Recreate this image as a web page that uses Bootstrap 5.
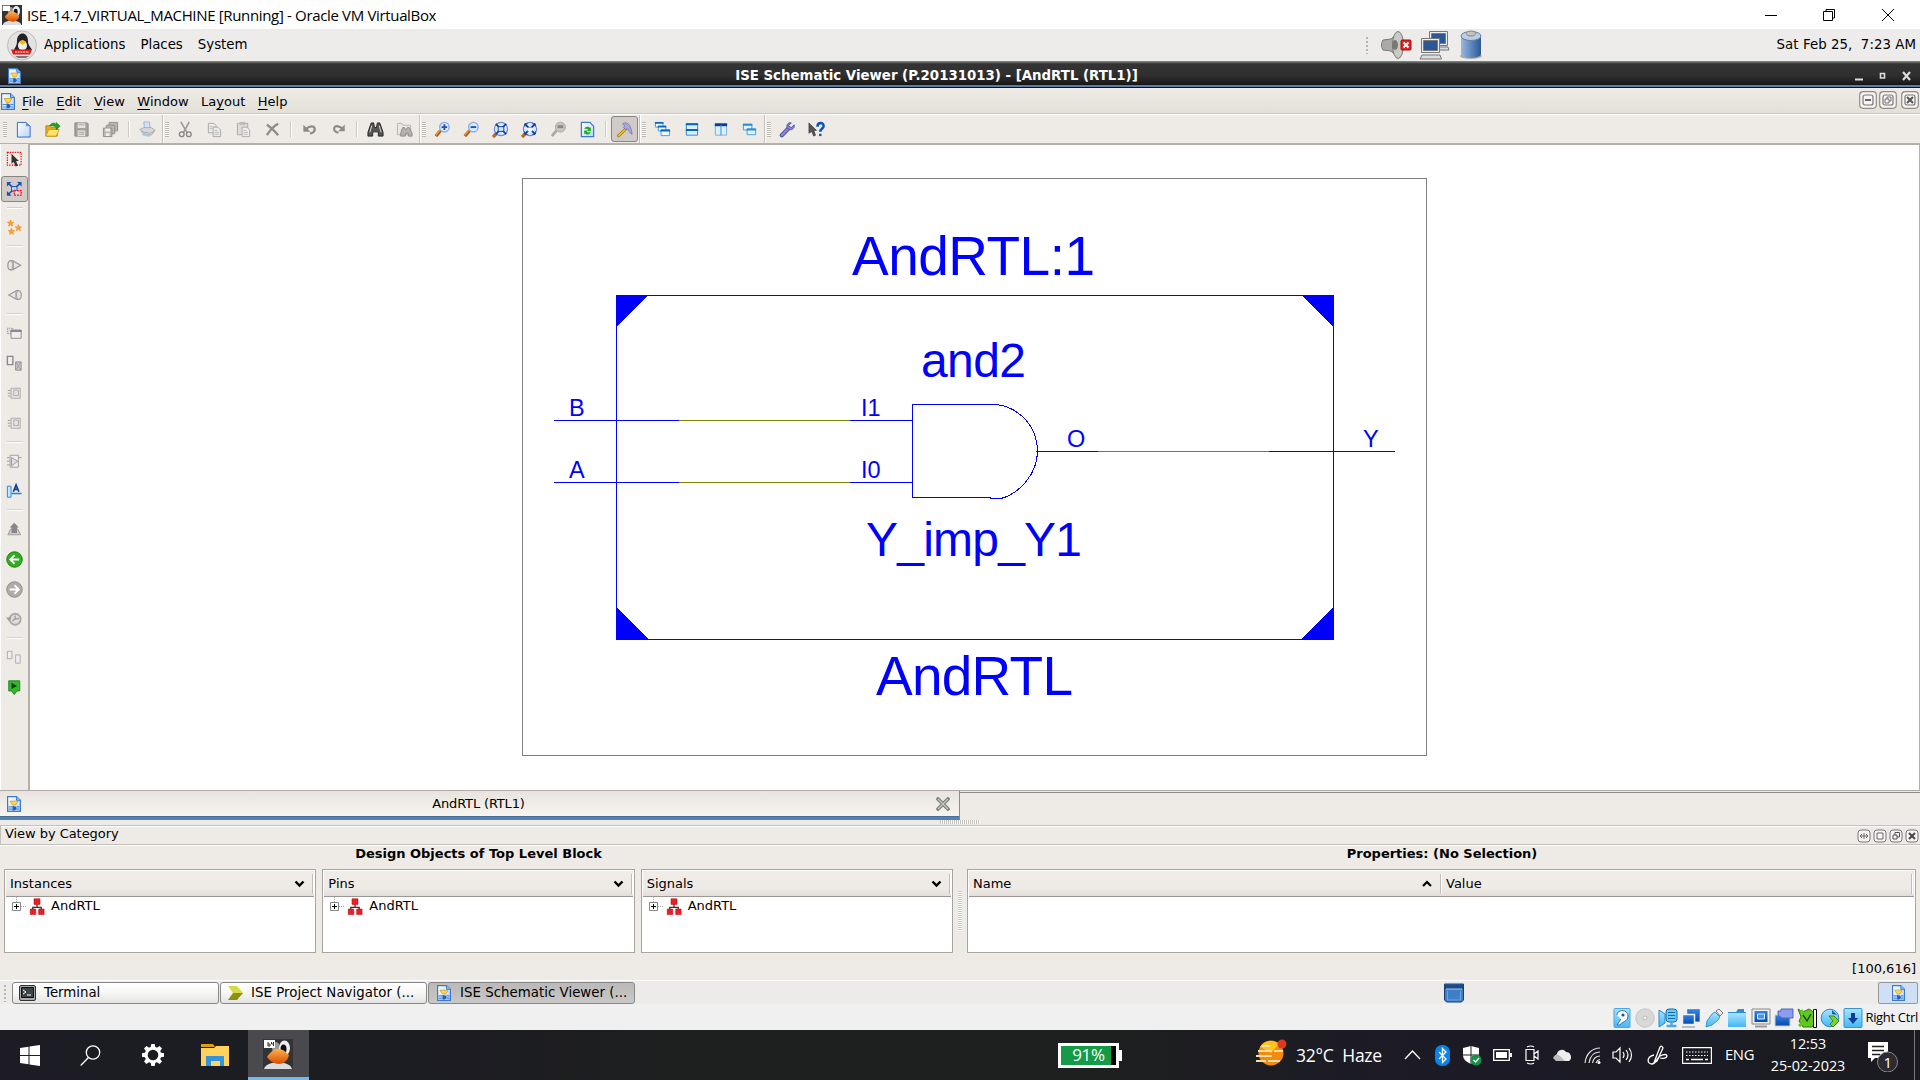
<!DOCTYPE html>
<html lang="en">
<head>
<meta charset="utf-8">
<title>ISE_14.7_VIRTUAL_MACHINE [Running] - Oracle VM VirtualBox</title>
<link href="https://cdn.jsdelivr.net/npm/bootstrap@5.3.0/dist/css/bootstrap.min.css" rel="stylesheet">
<style>
body{width:1920px;height:1080px;overflow:hidden;font-family:"DejaVu Sans",sans-serif;font-size:13px;line-height:1.2;color:#000;background:#eeebe7}
body>*{flex:none}
svg{display:block;flex:none}
.win{font-family:"Open Sans","Noto Sans",sans-serif}
.win-title{height:29px;background:#fff;font-size:15px;padding-left:2px}
.win-title .cap{letter-spacing:-.34px;margin-left:5px}
.win-btn{width:58.5px}
.gpanel{height:32px;background:#edeceb;font-size:13.33px;padding-left:7px}
.dark-title{height:27px;padding-top:2px;background:linear-gradient(#8a9088 0,#50534f 2px,#333 3px,#303030 14px,#1a1a1a 23px,#131313 24px,#5b7ca8 24px,#5b7ca8 26px,#0b0e14 26px);color:#fff;font-weight:bold;font-size:13.33px}
.dside{width:260px}
.mbar{height:26px;padding-top:2px;background:linear-gradient(#efebe6,#e3dfd9);border-bottom:1px solid #cbc7c2}
.mbar u{text-underline-offset:3px}
.tbar{height:31px;background:#eeebe6;border-top:1px solid #fff;border-bottom:2px solid #b5b0aa}
.tgroup{border-right:1px solid #c5c0bb;box-shadow:1px 0 #fff;height:28px;margin-right:-1px}
.tgroup:last-child{border:0;box-shadow:none}
.grip{width:9px;display:flex;justify-content:center;align-items:center}
.grip::before{content:"";width:4px;height:15px;background:repeating-linear-gradient(#b9b5b0 0 1px,#fff 1px 2px)}
.tbtn{width:29px;height:26px;margin-top:1px;display:flex;align-items:center;justify-content:center}
.tbtn.on{width:27px;margin:1px 1px 0}
.tbtn.on,.sbtn.on{background:#d0cbc6;border:1px solid #8a8580;border-radius:3px}
.tsep{width:8px;display:flex;justify-content:center;align-items:center}
.tsep::before{content:"";width:2px;height:16px;border-left:1px solid #ccc8c3;background:#fff}
.sidebar{width:28px;background:#eeebe6;border-left:1px solid #fff;margin-top:-1px}
.sbtn{height:30px;width:27px;display:flex;align-items:center;justify-content:center}
.sbtn.on{height:26px;margin:2px 0}
.ssep{height:8px;display:flex;align-items:center;justify-content:center}
.ssep::before{content:"";width:16px;height:2px;border-top:1px solid #d5d0cb;background:#fff}
.workarea{height:645px}
.canvas-box{border-left:2px solid #b5b0aa;border-right:1px solid #b5b0aa;background:#fff}
.tabrow{height:30px;border-top:1px solid #b0aba6}
.dtab{width:960px;height:29px;background:linear-gradient(#e8e3df,#f8f5f1);border-right:1px solid #8f8b87;border-bottom:3px solid #5482b1;box-shadow:inset 0 -1px #496f98;padding:0 9px 0 7px}
.tabrest{border-top:1px solid #8f8b87;margin-top:1px}
.hgrip{height:5px;display:flex;justify-content:center}
.hgrip::before{content:"";width:40px;height:4px;background:repeating-linear-gradient(90deg,#c5c1bc 0 1px,#fff 1px 2px)}
.docktitle{height:20px;border:1px solid #c3bfbb;border-right:0;box-shadow:inset 0 1px #fff,0 1px #fff;padding:0 1px 2px 4px;letter-spacing:-.05px}
.headrow{height:24px;font-weight:bold;padding-bottom:7px}
.panebox{height:84px;border:1px solid #a9a4a0;background:#fff;padding:1px}
.panehead{height:26px;background:linear-gradient(#f0ece8,#eeeae6 70%,#e3deda);border-bottom:1px solid #9d9793;padding-left:4px}
.vline{width:2px;height:20px;border-left:1px solid #c3beba;background:#fff}
.treerow{height:18px;padding-left:6px}
.vgrip{width:14px;display:flex;align-items:center;justify-content:center}
.vgrip::before{content:"";width:4px;height:40px;background:repeating-linear-gradient(#c5c1bc 0 1px,#fff 1px 2px)}
.left-pane{width:953px;padding-left:4px;gap:6px}
.statusb{height:27px;padding:4px 4px 0 0}
.gtask{height:24px;background:#ecebea;border-top:1px solid #fff;font-size:13.33px;padding-left:12px}
.gbtn{width:206.5px;height:22px;border:1px solid #888;border-radius:3px;background:linear-gradient(#fff,#f8f8f7 45%,#e4e3e1);padding-left:6px}
.gbtn.on{background:linear-gradient(#bab9b7,#c9c8c6);padding-top:1px}
.wsp{width:40px;height:22px;border:1px solid #999;border-radius:2px;background:#cfdff5;margin-right:2px}
.vbstat{height:26px;background:#f0f0f0;font-size:13px;padding-top:2px}
.vbstat .ic{width:23.1px;display:flex;justify-content:center}
.vbstat span{letter-spacing:-.32px;margin:0 2px 0 1px}
.wtask{height:50px;background:linear-gradient(90deg,#1d1c24,#1c1c23 22%,#1e1f1f 35%,#1e1f1f 58%,#1c1b26 72%,#1a1a20);color:#fff}
.wt{height:50px;display:flex;align-items:center;justify-content:center}
.wt.tile{width:61px;background:#49494e;border-bottom:3px solid #76b9ed}
.w60{width:60px}.w63{width:63px}.w30{width:30px}.w40{width:40px}.w45{width:45px}.w50{width:50px}.w92{width:92px}
.battery-box{width:61px;height:25px;border:3px solid #fff;background:linear-gradient(90deg,#159a48 90%,#000 90%);font-size:17px;letter-spacing:-.3px}
.clock{font-size:14.4px;line-height:22px;text-align:center;letter-spacing:-.05px}
.weather{font-size:17.5px;letter-spacing:-.25px;white-space:pre;width:88px;margin-left:7px}
.dotgrip{width:5px;height:18px;background:radial-gradient(circle,#b5b5b3 .8px,transparent 1px) 0 0/4px 4px}
</style>
</head>
<body class="d-flex flex-column">
<svg width="0" height="0" class="position-absolute">
<defs>
<linearGradient id="gb" x2="1" y2="1"><stop stop-color="#fff"/><stop offset="1" stop-color="#b8d5f8"/></linearGradient>
<linearGradient id="gc" x2="0" y2="1"><stop stop-color="#a9e3ff"/><stop offset="1" stop-color="#45b7f5"/></linearGradient>
<linearGradient id="gd" x2="0" y2="1"><stop stop-color="#3485e8"/><stop offset="1" stop-color="#0448a8"/></linearGradient>
<linearGradient id="gl" x2="1"><stop stop-color="#9bb8dc"/><stop offset=".5" stop-color="#5d89c0"/><stop offset="1" stop-color="#2e5890"/></linearGradient>
<linearGradient id="go" x2="0" y2="1"><stop stop-color="#ffb24d"/><stop offset="1" stop-color="#d94b00"/></linearGradient>
<symbol id="doc" viewBox="0 0 14 17" preserveAspectRatio="none"><path d="M.6.600h8.900l3.900 3.900v11.900H.6z" fill="url(#gb)" stroke="#3a7bd0" stroke-width="1.200"/><path d="M9.500.600v4h4" fill="#8bbcf2" stroke="#3a7bd0"/><path d="M3 5.500h8L8.500 9.500h-3z" fill="#ffd84a" stroke="#d0a020" stroke-width=".8"/><path d="M1.500 11.500h4m4 0h3M1.500 14h4m4 0h3" stroke="#4c8ade" stroke-width="1.200"/><path d="M5.500 10.500v5q4 0 4-2.500t-4-2.500z" fill="#1f5fc0"/></symbol>
<symbol id="newf" viewBox="0 0 18 18"><path d="M2.500 1.500h9l4.500 4v11.500H2.500z" fill="url(#gb)" stroke="#2e66c4"/><path d="M11.500 1.500v4H16z" fill="#5597ec"/></symbol>
<symbol id="open" viewBox="0 0 18 18"><path d="M2 5h5l1 2h6v9H2z" fill="#e0ac1d" stroke="#b98a14"/><path d="M2 16l3-7h11l-3 7z" fill="#ffe566" stroke="#c79b20"/><path d="M6 5c2-3 5-4 7-1V1.500l4 4-4 4V7c-2-2-4-2-7-2z" fill="#21a321" stroke="#13780f" stroke-width=".6"/></symbol>
<symbol id="save" viewBox="0 0 18 18"><path d="M2 2h13l1 1v13H2z" fill="#a4a29f" stroke="#898683"/><path d="M5 2.500h8v5H5zM5 10h8v6H5z" fill="#e5e3e0"/><path d="M6 4h6M6 12h6M6 14h6" stroke="#a4a29f"/></symbol>
<symbol id="savea" viewBox="0 0 18 18"><g fill="#bab7b3" stroke="#8f8c88"><path d="M7.500 1.500h9v9h-9z"/><path d="M4.500 4.500h9v9h-9z"/><path d="M1.500 7.500h9v9h-9z"/></g><path d="M3.500 8h5v3h-5zM4 13h4v3H4z" fill="#eee"/></symbol>
<symbol id="print" viewBox="0 0 18 18"><path d="M5 1h6l1 8H6z" fill="#d2e3f8" stroke="#8fa9ca" stroke-width=".8"/><path d="M1 9l4-2h8l4 3-4 5-9-2z" fill="#d8d7d6" stroke="#aaa"/><path d="M2 11l10 2 5-3" fill="none" stroke="#aaa"/><path d="M4 13l8 2-1 2-8-2z" fill="#a7c9ee"/></symbol>
<symbol id="cut" viewBox="0 0 18 18"><path d="M4 1l6.500 11M13 1L7 12" stroke="#999" stroke-width="1.700"/><circle cx="5" cy="14" r="2.500" fill="none" stroke="#888" stroke-width="1.500"/><circle cx="12.500" cy="14" r="2.500" fill="none" stroke="#888" stroke-width="1.500"/></symbol>
<symbol id="copy" viewBox="0 0 18 18"><g fill="#ecebe9" stroke="#aaa8a5"><path d="M2.500 2.500h6l2 2v8h-8z"/><path d="M7.500 6.500h5l3 3v7h-8z"/></g><path d="M4 6h3M4 8h3M9 10h3M9 12h5M9 14h5" stroke="#bbb"/></symbol>
<symbol id="paste" viewBox="0 0 18 18"><path d="M2.500 2.500h11v12h-11z" fill="#dedcd9" stroke="#aaa8a5"/><path d="M5 1h6v3H5z" fill="#bbb"/><path d="M7.500 6.500h5l3 3v7h-8z" fill="#f0efed" stroke="#aaa"/><path d="M9 10h3M9 12h5M9 14h5" stroke="#bbb"/></symbol>
<symbol id="del" viewBox="0 0 18 18"><path d="M3 4q5 3 12 11M15 3Q9 6 3 15" fill="none" stroke="#8d8a87" stroke-width="2.400"/></symbol>
<symbol id="undo" viewBox="0 0 18 18"><path d="M4 9Q13 3 14.500 8c.5 3-2 5-5 5" fill="none" stroke="#8d8a87" stroke-width="2.400"/><path d="M2.500 4v7.500H10z" fill="#8d8a87"/></symbol>
<symbol id="bino" viewBox="0 0 18 18"><path d="M4.500 2h2.500l1 5h2l1-5h2.500l3.500 10v4h-5v-4.500H6V16H1v-4z" fill="#555" stroke="#222"/><path d="M5 5L3 12M13 5l2 7" stroke="#ddd"/></symbol>
<symbol id="bino2" viewBox="0 0 18 18"><path d="M1.500 2.500h5l1 2h8v10h-14z" fill="#e9e7e4" stroke="#b5b3b0"/><path d="M7 7h2l1 2h1l1-2h2l3 6v3h-4v-3h-3v3H5v-3z" fill="#b5b3b0" stroke="#8b8987"/></symbol>
<symbol id="mag" viewBox="0 0 18 18"><path d="M2 16l5-6" stroke="#ad5c18" stroke-width="3.400"/><path d="M2 15l4-5" stroke="#efa244" stroke-width="1.200"/><circle cx="11" cy="6.500" r="5" fill="#dceaff" stroke="#8aa5ea" stroke-width="1.400"/></symbol>
<symbol id="zin" viewBox="0 0 18 18"><use href="#mag"/><path d="M8 6.500h6M11 3.500v6" stroke="#1c56ad" stroke-width="2"/></symbol>
<symbol id="zout" viewBox="0 0 18 18"><use href="#mag"/><path d="M8 6.500h6" stroke="#1c56ad" stroke-width="2"/></symbol>
<symbol id="zfit" viewBox="0 0 18 18"><path d="M1 17l4-4" stroke="#bd6718" stroke-width="3.500"/><circle cx="9.500" cy="8.500" r="7" fill="#dceaff" stroke="#6a89e0" stroke-width="1.300"/><path d="M4 3l11 11M15 3L4 14" stroke="#123e90" stroke-width="1.800"/><path d="M6.500 6h6v5h-6z" fill="#cfe6ff" stroke="#123e90"/></symbol>
<symbol id="zsel" viewBox="0 0 18 18"><path d="M1 17l4-4" stroke="#bd6718" stroke-width="3.500"/><circle cx="9.500" cy="8.500" r="7" fill="#dceaff" stroke="#6a89e0" stroke-width="1.300"/><path d="M4 3l11 11M15 3L4 14" stroke="#123e90" stroke-width="1.800"/><path d="M7 7h5v4H7z" fill="#f0f6ff"/><path d="M4 6v-3h3M12 3h3v3M4 11v3h3M15 11v3h-3" fill="none" stroke="#123e90"/></symbol>
<symbol id="zoff" viewBox="0 0 18 18"><path d="M2 16l5-6" stroke="#aaa8a5" stroke-width="3"/><circle cx="11" cy="6.500" r="5.300" fill="#c6c3c0" stroke="#aaa8a5"/><path d="M8 4.500h6v3H8z" fill="#888"/></symbol>
<symbol id="refr" viewBox="0 0 18 18"><path d="M2.500 1.500h9l4 4v11h-13z" fill="url(#gb)" stroke="#3a7bd0" stroke-width="1.300"/><path d="M5.500 8.500c1-3 5-3 6-1l1-1v4h-4l1.500-1.500C9 8 7 8 5.500 8.500M12.500 11c-1 4-5 4-6 2l-1 1v-4h4L8 11.500c1 1 3 1 4.500-.5" fill="#18a818"/></symbol>
<symbol id="hammer" viewBox="0 0 18 18"><path d="M1 15.500l9-8 1.500 1.500L3 17z" fill="#f5c21d" stroke="#a87900"/><path d="M7 3c4-3 9 0 10 11-3-1-3-4-5-6L10 9 8 7l1-2z" fill="#a9a8dd" stroke="#706fb2" stroke-width=".8"/></symbol>
<symbol id="casc" viewBox="0 0 18 18"><g fill="#eef7ff" stroke="#3d9be0"><path d="M1.500 1.500h8v5h-8z"/><path d="M4.500 5.500h8v5h-8z"/><path d="M7.500 9.500h9v6h-9z"/></g><path d="M1 2h9M4 6h9M7 10h10" stroke="#0667c2" stroke-width="2"/></symbol>
<symbol id="tileh" viewBox="0 0 18 18"><path d="M3.500 3h12v12h-12z" fill="#d8effe" stroke="#2b86cf"/><path d="M3 3.500h13M3 9.500h13" stroke="#0667c2" stroke-width="2"/></symbol>
<symbol id="tilev" viewBox="0 0 18 18"><path d="M3.500 3h12v12h-12z" fill="#d8effe" stroke="#73aee0"/><path d="M3 4h13" stroke="#063f9a" stroke-width="3"/><path d="M9.500 4v11" stroke="#3d86cf"/></symbol>
<symbol id="tilec" viewBox="0 0 18 18"><g fill="#e0f3ff" stroke="#3d9be0"><path d="M2.500 3.500h9v6h-9z"/><path d="M6.500 8.500h9v6h-9z"/></g><path d="M2 4h10M6 9h10" stroke="#2d8ad5" stroke-width="2"/></symbol>
<symbol id="wrench" viewBox="0 0 18 18"><path d="M3 15l7-7" stroke="#4f4f9c" stroke-width="4.500" stroke-linecap="round"/><path d="M3 15l7-7" stroke="#8987cf" stroke-width="2.500" stroke-linecap="round"/><path d="M13 2c-3-1-6 2-4 6 4 3 8 0 7-4l-3 3-3-2z" fill="#8987cf" stroke="#55549f"/></symbol>
<symbol id="whats" viewBox="0 0 18 18"><path d="M1 2l8 8H6l2 5-2 1-2-5-3 2z" fill="#555" stroke="#333" stroke-width=".7"/><path d="M10 6c0-5 7-5 6.500-.5C16.500 8 13 8 13 11.500" fill="none" stroke="#0b53b8" stroke-width="2.600"/><path d="M11.700 13.500h2.600V16h-2.600z" fill="#0b53b8"/></symbol>
<symbol id="sel" viewBox="0 0 18 18"><path d="M1.500 1.500h15v14h-15z" fill="none" stroke="#f00" stroke-width="1.300" stroke-dasharray="1.500 1.200"/><path d="M6 3l8 8h-3l2 5-2.500 1-2-5L6 14z" fill="#333"/></symbol>
<symbol id="fit" viewBox="0 0 18 18"><path d="M2 2l14 13M16 2L2 15" stroke="#1d4fb0" stroke-width="1.800"/><path d="M1 1h5L1 6zM17 1v5l-5-5zM1 16v-5l5 5z" fill="#1d4fb0"/><path d="M6 6h6v5H6z" fill="#add4fa" stroke="#1d4fb0"/><path d="M9 10.500h7.500v5H9z" fill="#dfd9d5" stroke="#f00" stroke-width="1.300" stroke-dasharray="2 1"/></symbol>
<symbol id="stars" viewBox="0 0 18 18"><g fill="#ffa32c" stroke="#f17d17" stroke-width=".5"><path id="st" d="M5 1l1 2.400 2.600.2-2 1.700.6 2.600L5 6.500 2.800 7.900l.6-2.600-2-1.700L4 3.400z"/><use href="#st" x="8.500" y="5"/><use href="#st" x="1" y="9"/></g></symbol>
<symbol id="cone" viewBox="0 0 18 18"><path d="M5 4c-4 0-4 10 0 10h2l9-5-9-5z" fill="#e7e5e2" stroke="#999" stroke-width="1.300"/><path d="M5 4c3 0 3 10 0 10M8 4v10" fill="none" stroke="#999"/></symbol>
<symbol id="hier" viewBox="0 0 18 18"><path d="M1.500 3.500h6v6h-6z" fill="#ddd" stroke="#888" stroke-dasharray="1 1"/><path d="M5.500 5.500h11v9h-11z" fill="#eee" stroke="#888"/><path d="M5 6.500h12" stroke="#888" stroke-width="2"/></symbol>
<symbol id="two" viewBox="0 0 18 18"><path d="M1.500 1.500h6v9h-6z" fill="#eee" stroke="#888" stroke-width="1.500"/><path d="M10.500 7.500h6v9h-6z" fill="#ccc" stroke="#888"/><path d="M11 8l5 8M16 8l-5 8" stroke="#999"/></symbol>
<symbol id="chip" viewBox="0 0 18 18"><path d="M5.500 3.500h10v11h-10z" fill="#e5e3e0" stroke="#aaa"/><path d="M8.500 5.500h5v6h-5z" fill="none" stroke="#aaa"/><path d="M2 6h3M2 9h3M2 12h3" stroke="#999"/></symbol>
<symbol id="buf" viewBox="0 0 18 18"><path d="M4.500 2.500h9v13h-9z" fill="#eee" stroke="#999"/><path d="M6 5l7 4-7 5z" fill="#ddd" stroke="#999"/><path d="M1 5h3M1 9h3M1 13h3M14 5h3" stroke="#999"/></symbol>
<symbol id="lab" viewBox="0 0 18 18"><path d="M1.500 3.500h4v12h-4z" fill="#c3eaff" stroke="#1d86da"/><path d="M6 11.500h11" stroke="#1d86da" stroke-width="1.500"/><path d="M8 9.500L11 2l3 7.500M9 7h4" fill="none" stroke="#123e90" stroke-width="1.800"/></symbol>
<symbol id="up" viewBox="0 0 18 18"><path d="M2 15l3-6h8l3 6z" fill="#ccc" stroke="#999"/><path d="M9 2l5 5h-2v6H6V7H4z" fill="#888"/></symbol>
<symbol id="arr" viewBox="0 0 18 18"><path d="M14 9H5M9 4.500L4.500 9 9 13.500" fill="none" stroke="#fff" stroke-width="1.900"/></symbol>
<symbol id="hist" viewBox="0 0 18 18"><circle cx="10" cy="9" r="6" fill="#e0dedb" stroke="#aaa" stroke-width="2"/><path d="M10 5v4l4-1M7 11l2-2" fill="none" stroke="#999" stroke-width="1.400"/><path d="M0 7h6l-3 4z" fill="#999"/></symbol>
<symbol id="two2" viewBox="0 0 18 18"><g fill="#eee" stroke="#aaa"><path d="M1.500 2.500h5v8h-5z"/><path d="M10.500 6.500h5v9h-5z"/></g></symbol>
<symbol id="play" viewBox="0 0 18 18"><path d="M3 2h12v11h-3l-3 4-3-4H3z" fill="#36b62c" stroke="#16851a"/><path d="M6 4l6 3.500L6 11z" fill="#063f0a"/></symbol>
<symbol id="tree" viewBox="0 0 18 20"><path d="M9 7v4M4 14v-3h10v3" fill="none" stroke="#333" stroke-width="1.500"/><g fill="#ee1c24" stroke="#c40d14" stroke-width=".7"><path d="M5.500 1h7v6.500h-7zM1 13h6.500v6.500H1zM11 13h6.500v6.500H11z"/></g></symbol>
<symbol id="tux" viewBox="0 0 30 30"><path d="M0 0h30v30H0z" fill="#333"/><path d="M1 30c2-9 26-9 28 0z" fill="#ddd"/><ellipse cx="13" cy="9" rx="4" ry="6" fill="#999"/><ellipse cx="21.500" cy="9" rx="5.500" ry="7.500" fill="#eee"/><ellipse cx="20.500" cy="10" rx="3" ry="4.500" fill="#111"/><path d="M4 18c4-6 9-9 12-8 4 0 8 4 10 6-1 6-6 9-10 9-5 0-9-3-12-7z" fill="url(#go)"/><path d="M1 1h11v8H1z" fill="#fff"/></symbol>
<symbol id="mini" viewBox="0 0 18 18"><rect x=".7" y=".7" width="16.600" height="16.600" rx="3.500" fill="#f7f5f3" stroke="#918c87" stroke-width="1.200"/><rect x="4" y="4" width="10" height="10" rx="2" fill="none" stroke="#777" stroke-width="1.200"/></symbol>
</defs>
</svg>

<header class="win win-title d-flex align-items-center">
 <svg width="20" height="20" viewBox="0 0 30 30"><use href="#tux"/></svg>
 <span class="cap">ISE_14.7_VIRTUAL_MACHINE [Running] - Oracle VM VirtualBox</span>
 <div class="d-flex ms-auto" style="margin-right:3px">
  <div class="win-btn d-flex justify-content-center"><svg width="12" height="14"><path d="M0 7.500h12" stroke="#000"/></svg></div>
  <div class="win-btn d-flex justify-content-center"><svg width="13" height="14"><path d="M.5 3.500h9v9h-9zM3 3V1.500h8.500V10H10" fill="none" stroke="#000"/></svg></div>
  <div class="win-btn d-flex justify-content-center"><svg width="12" height="14"><path d="M0 1l12 12M12 1L0 13" stroke="#000"/></svg></div>
 </div>
</header>

<nav class="gpanel d-flex align-items-center">
 <svg width="30" height="31" viewBox="0 0 30 31"><circle cx="15" cy="15.500" r="14.500" fill="#e2e2e2" stroke="#bbb"/><path d="M7 20c1-3 3-4 3-9 0-10 11-10 11 0 0 5 3 6 4 9z" fill="#222"/><ellipse cx="15.500" cy="15.500" rx="4.500" ry="5" fill="#eee"/><path d="M12 12l3.500-2 4 2-4 3z" fill="#f8b80e"/><path d="M4 19.500h21l-2 5H6z" fill="#df1b1b"/><path d="M8 22h14" stroke="#fff" stroke-dasharray="2 .7"/><path d="M8 26h14l-3 2h-8z" fill="#777"/></svg>
 <span style="margin-left:7px">Applications</span><span style="margin-left:15px">Places</span><span style="margin-left:15px">System</span>
 <div class="d-flex align-items-center ms-auto" style="margin-right:292px;gap:7px">
  <div class="dotgrip me-1"></div>
  <svg width="31" height="30" viewBox="0 0 31 30"><path d="M2 10l8-1 8-7v26l-8-7-8-1c-2-3-2-7 0-10z" fill="#aaaba7" stroke="#777973"/><ellipse cx="17" cy="15" rx="5.500" ry="13.500" fill="#c9cac5" stroke="#7a7c76"/><ellipse cx="14" cy="15" rx="3" ry="5" fill="#777973"/><rect x="20" y="10" width="10" height="10" rx="1" fill="#e52222" stroke="#a80a0a"/><path d="M22.500 12.500l5 5m0-5l-5 5" stroke="#fff" stroke-width="1.800"/></svg>
  <svg width="31" height="30" viewBox="0 0 31 30"><g stroke="#777"><path d="M10.500 1.500h18v14h-18z" fill="#eee"/><path d="M12.500 3.500h14v10h-14z" fill="#2b5797"/><path d="M15 17h14l1 3H15z" fill="#ddd"/><path d="M2.500 8.500h18v14h-18z" fill="#eee"/><path d="M4.500 10.500h14v10h-14z" fill="#2b5797"/><path d="M3 25h18l1.500 4H1z" fill="#ddd"/></g></svg>
  <svg width="28" height="30" viewBox="0 0 28 30"><ellipse cx="14" cy="26" rx="11" ry="3" fill="#aaa"/><path d="M4 6v18c0 5 20 5 20 0V6z" fill="url(#gl)"/><ellipse cx="14" cy="6" rx="10" ry="4.500" fill="#bccde4" stroke="#6080a8"/><ellipse cx="14" cy="3.500" rx="4.500" ry="2.500" fill="#c4c4ba" stroke="#888"/></svg>
 </div>
 <span style="margin-right:4px;white-space:pre;letter-spacing:.05px">Sat Feb 25,  7:23 AM</span>
</nav>

<div class="dark-title d-flex align-items-center">
 <div class="dside ps-2"><svg width="13" height="16"><use href="#doc"/></svg></div>
 <div class="flex-fill text-center" style="padding-right:47px">ISE Schematic Viewer (P.20131013) - [AndRTL (RTL1)]</div>
 <div class="dside d-flex justify-content-end pe-1"><svg width="62" height="12" viewBox="0 0 62 12"><path d="M1 9.500h8" stroke="#ddd" stroke-width="2"/><path d="M26.500 3.500h4v4.500h-4z" fill="none" stroke="#ddd" stroke-width="1.600"/><path d="M49 2l7 8M56 2l-7 8" stroke="#ddd" stroke-width="2.200"/></svg></div>
</div>

<nav class="mbar d-flex align-items-center">
 <svg width="14" height="17" style="margin:0 8px 0 1px"><use href="#doc"/></svg>
 <div class="d-flex flex-fill" style="gap:12.500px;margin-left:-1px"><span><u>F</u>ile</span><span><u>E</u>dit</span><span><u>V</u>iew</span><span><u>W</u>indow</span><span>La<u>y</u>out</span><span><u>H</u>elp</span></div>
 <div class="d-flex gap-1 pb-1" style="padding-right:1px">
  <svg width="18" height="18"><use href="#mini"/><path d="M6 9h6" stroke="#666" stroke-width="2"/></svg>
  <svg width="18" height="18" style="margin-left:-2px"><use href="#mini"/><path d="M6 8h4v4H6zM8 8V6h4v4h-2" fill="none" stroke="#777"/></svg>
  <svg width="18" height="18"><use href="#mini"/><path d="M6 6l6 6m0-6l-6 6" stroke="#555" stroke-width="2"/></svg>
 </div>
</nav>

<div class="tbar d-flex">
 <div class="tgroup d-flex" id="g1"></div><div class="tgroup d-flex" id="g2"></div><div class="tgroup d-flex" id="g3"></div><div class="tgroup d-flex" id="g4"></div><div class="tgroup d-flex" id="g5"></div>
</div>

<main class="workarea d-flex">
 <aside class="sidebar" id="side"></aside>
 <div class="canvas-box flex-fill">
  <svg width="1889" height="645" viewBox="30 145 1889 645" font-family="Liberation Sans, Arial, sans-serif" fill="#00f">
   <g shape-rendering="crispEdges" fill="none">
    <rect x="522.500" y="178.500" width="904" height="577" stroke="#808080"/>
    <g stroke="#00f"><rect x="616.500" y="295.500" width="717" height="344"/>
    <path d="M554 420.500h125M850 420.500h62M554 482.500h125M850 482.500h62M1036 451.500h62M1269 451.500h126"/>
    <path d="M997 404.500H912.500v93H990l1 1h10C1018 494 1037.500 475 1037.500 451S1020 408 997 404.500"/></g>
    <path d="M679 420.500h171M679 482.500h171M1098 451.500h171" stroke="#808000"/>
    <path d="M616 295h32l-32 32zM1301 295h33v33zM616 607v33h33zM1334 606v34h-34z" fill="#00f"/>
   </g>
   <g font-size="55"><text x="852" y="275" textLength="243">AndRTL:1</text><text x="876" y="695" textLength="197">AndRTL</text></g>
   <g font-size="48"><text x="921" y="377" textLength="105">and2</text><text x="866" y="556" textLength="216">Y_imp_Y1</text></g>
   <g font-size="23.500"><text x="569" y="416">B</text><text x="569" y="478">A</text><text x="861" y="416">I1</text><text x="861" y="478">I0</text><text x="1067" y="447">O</text><text x="1363" y="447">Y</text></g>
  </svg>
 </div>
</main>

<div class="tabrow d-flex">
 <div class="dtab d-flex align-items-center"><svg width="14" height="16"><use href="#doc"/></svg><span class="flex-fill text-center" style="letter-spacing:-.15px">AndRTL (RTL1)</span><svg width="14" height="14" viewBox="0 0 14 14"><path d="M2 2l10 10M12 2L2 12" stroke="#777b74" stroke-width="3.600" stroke-linecap="round"/><path d="M2 2l10 10M12 2L2 12" stroke="#c8cac3" stroke-width="1.300"/></svg></div>
 <div class="tabrest flex-fill"></div>
</div>
<div class="hgrip"></div>
<div class="docktitle d-flex align-items-center justify-content-between"><span>View by Category</span>
 <div class="d-flex" style="gap:2px;padding-top:3px">
  <svg width="14" height="14" viewBox="0 0 14 14"><rect x="1" y="1" width="12" height="12" rx="3" fill="#f7f5f3" stroke="#777"/><path d="M3 7h8M5 5L3 7l2 2M9 5l2 2-2 2M7 4v6" fill="none" stroke="#666"/></svg>
  <svg width="14" height="14" viewBox="0 0 14 14"><rect x="1" y="1" width="12" height="12" rx="3" fill="#f7f5f3" stroke="#777"/><path d="M4 4h6v6H4z" fill="none" stroke="#666"/></svg>
  <svg width="14" height="14" viewBox="0 0 14 14"><rect x="1" y="1" width="12" height="12" rx="3" fill="#f7f5f3" stroke="#777"/><path d="M4 6h4v4H4zM6 6V3.500h4.500V8H8" fill="none" stroke="#555"/></svg>
  <svg width="14" height="14" viewBox="0 0 14 14"><rect x="1" y="1" width="12" height="12" rx="3" fill="#f7f5f3" stroke="#777"/><path d="M4 4l6 6m0-6l-6 6" stroke="#444" stroke-width="2"/></svg>
 </div>
</div>
<div class="headrow d-flex align-items-center text-center"><span style="width:957px">Design Objects of Top Level Block</span><span class="flex-fill" style="padding-left:7px">Properties: (No Selection)</span></div>
<div class="d-flex">
 <div class="left-pane d-flex" id="panes"></div>
 <div class="vgrip"></div>
 <div class="panebox flex-fill" style="margin-right:4px"><div class="panehead d-flex align-items-center"><span style="width:449px">Name</span><svg width="10" height="7"><path d="M1 6l4-4 4 4" fill="none" stroke="#000" stroke-width="2.200"/></svg><div class="vline" style="margin-left:8px"></div><span class="ps-1">Value</span><div class="vline ms-auto" style="margin-right:1px"></div></div></div>
</div>
<div class="statusb d-flex justify-content-end align-items-center"><span>[100,616]</span></div>

<div class="gtask d-flex align-items-center position-relative">
 <div class="dotgrip" style="margin:0 4px 0 -9px"></div>
 <div class="d-flex" style="gap:1.500px">
  <div class="gbtn d-flex align-items-center"><svg width="17" height="16" viewBox="0 0 17 16"><rect x=".5" y=".5" width="16" height="15" rx="1.500" fill="#aaa" stroke="#333"/><path d="M2.500 2.500h12v10h-12z" fill="#3c4648" stroke="#111"/><path d="M4 5l3 2-3 2M8 10h4" fill="none" stroke="#fff"/></svg><span style="margin-left:8px">Terminal</span></div>
  <div class="gbtn d-flex align-items-center"><svg width="17" height="16" viewBox="0 0 17 16"><path d="M1 1h9l6 7H6z" fill="#d6da4a"/><path d="M6 8h10l-6 7H1z" fill="#8d900f"/></svg><span style="margin-left:7px;letter-spacing:.04px">ISE Project Navigator (...</span></div>
  <div class="gbtn on d-flex align-items-center"><svg width="14" height="16" style="margin:0 2px"><use href="#doc"/></svg><span style="margin-left:7px;letter-spacing:.03px">ISE Schematic Viewer (...</span></div>
 </div>
 <svg width="20" height="20" viewBox="0 0 20 20" style="margin-left:809px"><path d="M.5 1h19v16l-2 2h-15l-2-2z" fill="#3f7fca" stroke="#163f75"/><path d="M1 1.500h18V6H1z" fill="#1d4b88"/><path d="M2 6h16" stroke="#a8c9ee"/><path d="M3.500 8v9h13V8" fill="none" stroke="#6ea3e0"/></svg>
 <div class="wsp ms-auto d-flex align-items-center justify-content-center"><svg width="13" height="16"><use href="#doc"/></svg></div>
</div>

<div class="vbstat win d-flex align-items-center justify-content-end">
 <div class="ic"><svg width="18" height="20" viewBox="0 0 18 20"><rect x="1" y=".5" width="16" height="19" rx="1" fill="url(#gc)" stroke="#4aa8e0"/><path d="M4 7c0-6 11-6 11 1 0 6-7 6-8 9H4l4-6" fill="#fff" stroke="#2d6fa8"/><circle cx="10" cy="7" r="1.600" fill="#1556a8"/></svg></div>
 <div class="ic"><svg width="20" height="20"><circle cx="10" cy="10" r="9.200" fill="#d8d8d8" stroke="#c4c4c4"/><circle cx="10" cy="10" r="2" fill="#f0f0f0" stroke="#bbb"/></svg></div>
 <div class="ic"><svg width="20" height="20"><path d="M1 2l6 4v9l-6 4z" fill="url(#gc)" stroke="#2a8bc8"/><rect x="8" y="1" width="11" height="13" rx="3" fill="#68c8f5" stroke="#1b6ca8"/><path d="M10 4.500h7M10 7.500h7M10 10.500h7" stroke="#1b6ca8"/><path d="M13.500 14v4M8.500 18h10" stroke="#4aa8e0" stroke-width="2.400"/></svg></div>
 <div class="ic"><svg width="20" height="20"><path d="M6.500 1.500h12v12h-12z" fill="url(#gd)" stroke="#888"/><path d="M1.500 6.500h12v10h-12z" fill="url(#gd)" stroke="#eee" stroke-width="1.500"/><path d="M1 19h13" stroke="#888"/></svg></div>
 <div class="ic"><svg width="20" height="20"><path d="M12 3l3-2 4 4-3 3z" fill="#eee" stroke="#777"/><path d="M8 6l3-2 5 5-2 3-6 5-6 2 1-6z" fill="url(#gc)" stroke="#3497cd"/></svg></div>
 <div class="ic"><svg width="20" height="20"><path d="M1 4h8l2-3h6v3h2v15H1z" fill="#2b8fd2"/><path d="M1 5h18v14H1z" fill="url(#gc)"/></svg></div>
 <div class="ic"><svg width="20" height="20"><path d="M1 1h18v15H1z" fill="#eee" stroke="#888"/><path d="M3.500 3h13v11h-13z" fill="url(#gd)"/><path d="M6.500 6h7v5h-7z" fill="#4494ee" stroke="#d9edff"/><path d="M4 18.500h12" stroke="#999" stroke-width="2"/></svg></div>
 <div class="ic"><svg width="20" height="20"><path d="M1 7h15v11H1z" fill="url(#gd)" stroke="#ccc"/><path d="M7 1h12v9H8L4 7V3h3z" fill="#8b9df0" stroke="#5065b7"/></svg></div>
 <div class="ic"><svg width="20" height="20"><path d="M1 1l5 3 6-3 6 4-2 4 2 5-3 5H6l-4-6 2-4z" fill="#61c820" stroke="#2d7c08"/><path d="M4 2l2 3M2 18l4-3" stroke="#61c820" stroke-width="3"/><path d="M6 7l4 6 4-7" fill="none" stroke="#164a08" stroke-width="1.400"/><path d="M16.500 1.500h3v18h-3z" fill="#fff" stroke="#000"/></svg></div>
 <div class="ic"><svg width="20" height="20"><circle cx="10" cy="10" r="8.800" fill="url(#gc)" stroke="#2688c7"/><path d="M12 2l5 5-5-1z" fill="#205da0"/><path d="M9 8h5l5 5-6 6-3-3 3-3z" fill="#78d42d" stroke="#348d10"/></svg></div>
 <div class="ic"><svg width="20" height="20"><rect x="1" y=".5" width="18" height="19" rx="1" fill="url(#gc)" stroke="#3297d0"/><path d="M8 5h4v5h3l-5 6-5-6h3z" fill="#0a3f93"/></svg></div>
 <span>Right Ctrl</span>
</div>

<footer class="wtask win d-flex">
 <div class="wt w60"><svg width="20" height="21" viewBox="0 0 20 21"><path d="M0 3l8.500-1.200v8.200H0zM9.500 1.600L20 0v10H9.500zM0 11h8.500v8.200L0 18zM9.500 11H20v10L9.500 19.400z" fill="#fff"/></svg></div>
 <div class="wt w60"><svg width="21" height="21" viewBox="0 0 21 21"><circle cx="13" cy="7.500" r="6.700" fill="none" stroke="#fff" stroke-width="1.300"/><path d="M8.500 12.500L.7 20.500" stroke="#fff" stroke-width="1.300"/></svg></div>
 <div class="wt w63" style="padding-left:3px"><svg width="24" height="24" viewBox="-12 -12 24 24"><circle r="6.800" fill="none" stroke="#fff" stroke-width="3"/><path id="tooth" d="M-1.700-11h3.400l.8 4h-5z" fill="#fff"/><use href="#tooth" transform="rotate(45)"/><use href="#tooth" transform="rotate(90)"/><use href="#tooth" transform="rotate(135)"/><use href="#tooth" transform="rotate(180)"/><use href="#tooth" transform="rotate(225)"/><use href="#tooth" transform="rotate(270)"/><use href="#tooth" transform="rotate(315)"/></svg></div>
 <div class="wt w63"><svg width="28" height="24" viewBox="0 0 28 24"><path d="M0 1h12l2 3H0z" fill="#e29d0c"/><path d="M0 5h13l2-2h13v20H0z" fill="#ffd35c"/><path d="M5 23V13h18v10h-4v-5h-9v5z" fill="#3492df"/></svg></div>
 <div class="wt tile" style="margin-left:2px"><svg width="30" height="30" viewBox="0 0 30 30" style="margin-right:2px"><use href="#tux"/><path d="M5 3v4h2V5H5M8.500 3v2h2M10.500 3v4" fill="none" stroke="#333"/></svg></div>
 <div class="wt" style="margin-left:749px"><div class="battery-box d-flex align-items-center justify-content-center">91%</div><div class="bg-white" style="width:3px;height:11px"></div></div>
 <div class="wt" style="margin-left:134px"><svg width="32" height="32" viewBox="0 0 32 32"><circle cx="15" cy="14" r="12.500" fill="#f58a0c"/><path d="M4 8a12.500 12.500 0 0 1 19-3L15 14z" fill="#ffc31c"/><circle cx="26" cy="5" r="4.500" fill="#d83a24"/><path d="M6 7h8M2 12h14m2 0h9M0 17h16M0 22h10m2 0h12" stroke="#f4dfaa" stroke-width="2"/></svg></div>
 <div class="wt weather">32°C  Haze</div>
 <div class="ms-auto d-flex">
  <div class="wt w30"><svg width="17" height="10"><path d="M1 9l7.500-8L16 9" fill="none" stroke="#fff" stroke-width="1.300"/></svg></div>
  <div class="wt w30"><svg width="15" height="21" viewBox="0 0 15 21"><rect width="15" height="21" rx="7" fill="#0a84ea"/><path d="M4 7l7 7-3.500 3.500v-14L11 7l-7 7" fill="none" stroke="#fff" stroke-width="1.300"/></svg></div>
  <div class="wt w30"><svg width="20" height="21" viewBox="0 0 20 21"><path d="M9 1l8 2v7c0 5-4 7-8 9-4-2-8-4-8-9V3z" fill="#fff"/><path d="M9 1v18M1 10h16" stroke="#222"/><circle cx="14" cy="15" r="5.500" fill="#159347"/><path d="M11.500 15l2 2 3.500-4" fill="none" stroke="#fff" stroke-width="1.300"/></svg></div>
  <div class="wt w30"><svg width="19" height="12"><path d="M.7.700h15.600v10.600H.7z" fill="none" stroke="#fff" stroke-width="1.300"/><path d="M3 3h11v6H3zM17 4h2v4h-2z" fill="#fff"/></svg></div>
  <div class="wt w30"><svg width="15" height="20"><path d="M1 4.500h8v11H1zM9 9l4-3v8l-4-3M2 2q4-2 7 0M2 18q4 2 7 0" fill="none" stroke="#fff" stroke-width="1.200"/></svg></div>
  <div class="wt w30"><svg width="21" height="14"><path d="M5 13a4 4 0 0 1 0-7 5 5 0 0 1 9-2 5 5 0 0 1 3 9z" fill="#eee"/><path d="M1 10q3-6 7-2l5 5H4z" fill="#bbb"/></svg></div>
  <div class="wt w30"><svg width="17" height="18"><g fill="none" stroke="#ddd" stroke-width="1.200"><path d="M1 17C2 7 9 2 16 2M5 17C6 10 10 6 16 6M8.500 17c1-5 3-7 7.500-7M12 17q1-3 4-3.500"/></g><circle cx="15" cy="16.500" r="1.500" fill="#fff"/></svg></div>
  <div class="wt w30"><svg width="21" height="18"><path d="M1 6h3l4-4v14l-4-4H1zM11 6q2 3 0 6M14 4q4 5 0 10M17 2q5 7 0 14" fill="none" stroke="#fff" stroke-width="1.200"/></svg></div>
  <div class="wt w40"><svg width="21" height="20"><path d="M8 15L13 2q2-2 3 1L10 16l-3 2zM7 10c-8 2-7 9-2 9 4 0 4-5 8-8 4-2 7-2 7 0s-4 3-7 2" fill="none" stroke="#fff" stroke-width="1.300"/></svg></div>
  <div class="wt w40"><svg width="30" height="17"><path d="M.6.600h28.800v15.800H.6z" fill="none" stroke="#fff" stroke-width="1.200"/><path d="M4 5h22M4 8.500h22" stroke="#fff" stroke-width="1.200" stroke-dasharray="1.500 1.500"/><path d="M4 12.500h3m2 0h12m2 0h3" stroke="#fff" stroke-width="1.300"/></svg></div>
  <div class="wt w45" style="font-size:14.800px;letter-spacing:-.3px">ENG</div>
  <div class="wt w92 clock"><div>12:53<br>25-02-2023</div></div>
  <div class="wt w50"><svg width="34" height="34" viewBox="0 0 34 34" style="margin-left:10px"><path d="M1 4h20v16H8l-4 4v-4H1z" fill="#fff"/><path d="M5 8.500h12M5 12.500h12M5 16.500h8" stroke="#222" stroke-width="1.400"/><circle cx="20.500" cy="24" r="10" fill="#2b2b30" stroke="#888"/><text x="16.500" y="29.500" font-size="15" fill="#fff">1</text></svg></div>
  <div class="wt" style="width:16px"><div style="width:1px;height:50px;background:#777;margin-left:4px"></div></div>
 </div>
</footer>

<script src="https://cdn.jsdelivr.net/npm/bootstrap@5.3.0/dist/js/bootstrap.bundle.min.js"></script>
<script>
// Toolbar contents: icon ids, "|" is a separator, "!" marks a pressed button.
const icon=(n,s,x='')=>`<svg width="${s}" height="${s}" ${x}><use href="#${n}"/></svg>`;
const box='viewBox="0 0 18 18"';
const mirror='style="transform:scaleX(-1)"';
const groups={g1:'newf open save savea | print',g2:'cut copy paste del | undo redo | bino bino2',g3:'zin zout zfit zsel zoff refr | !hammer',g4:'casc tileh tilev tilec',g5:'wrench whats'};
for(const[id,list]of Object.entries(groups)){
 document.getElementById(id).innerHTML='<div class="grip"></div>'+list.split(' ').map(n=>{
  if(n==='|')return '<div class="tsep"></div>';
  const on=n[0]==='!';if(on)n=n.slice(1);
  const g=n==='redo'?icon('undo',16,box+' '+mirror):icon(n,17,box);
  return `<div class="tbtn${on?' on':''}">${g}</div>`;}).join('');
}
const round=(c,d,f)=>`<svg width="17" height="17" ${box} ${f?mirror:''}><circle cx="9" cy="9" r="8.200" fill="${c}" stroke="${d}"/><use href="#arr"/></svg>`;
document.getElementById('side').innerHTML='sel !fit | stars | cone coneL | hier two chip chip | buf lab | up back fwd hist | two2 play'.split(' ').map(n=>{
 if(n==='|')return '<div class="ssep"></div>';
 const on=n[0]==='!';if(on)n=n.slice(1);
 const g=n==='coneL'?icon('cone',16,box+' '+mirror):n==='back'?round('#2fae1e','#17800f'):n==='fwd'?round('#aeaba8','#8e8b88',1):icon(n,16.5,box);
 return `<div class="sbtn${on?' on':''}">${g}</div>`;}).join('');
document.getElementById('panes').innerHTML=['Instances','Pins','Signals'].map(t=>`<div class="panebox flex-fill" style="flex-basis:0"><div class="panehead d-flex align-items-center"><span>${t}</span><svg class="ms-auto" width="11" height="8"><path d="M1.500 1.500l4 4 4-4" fill="none" stroke="#000" stroke-width="2.400"/></svg><div class="vline" style="margin-left:7px"></div></div><div class="treerow d-flex align-items-center"><svg width="16" height="18"><path d="M.5 5.500h8v8h-8z" fill="#fff" stroke="#888"/><path d="M2 9.500h5M4.500 7v5" stroke="#000"/><path d="M4.500 0v5M9 9.500h6" stroke="#aaa" stroke-dasharray="1 1"/></svg><svg width="16" height="17" viewBox="0 0 18 20" style="margin:0 6px 0 1px"><use href="#tree"/></svg>AndRTL</div></div>`).join('');
</script>
</body>
</html>
